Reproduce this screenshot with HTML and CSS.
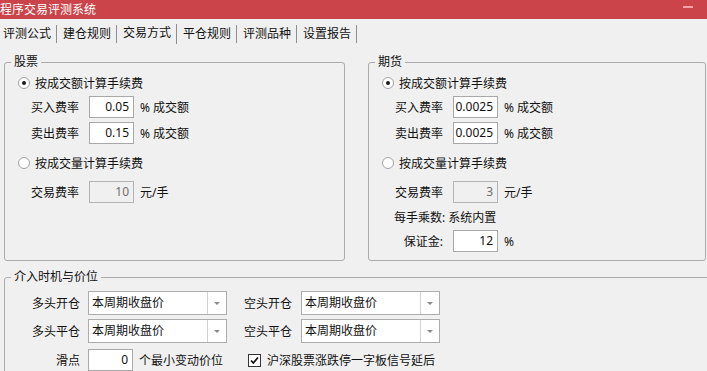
FILE: index.html
```html
<!DOCTYPE html>
<html>
<head>
  <title>程序交易评测系统</title>
  <link rel="stylesheet" href="styles.css">
</head>
<body>
  <div class="titlebar">
    <span class="title">程序交易评测系统</span>
    <span class="min-btn"></span>
  </div>

  <div class="tabs">
    <span class="tab">评测公式</span>
    <span class="tab">建仓规则</span>
    <span class="tab active">交易方式</span>
    <span class="tab">平仓规则</span>
    <span class="tab">评测品种</span>
    <span class="tab">设置报告</span>
  </div>

  <div class="panel">
    <div class="groups">
      <fieldset class="group">
        <legend>股票</legend>
        <div class="row opt first"><span class="radio on"></span>按成交额计算手续费</div>
        <div class="row field g2"><span class="lbl">买入费率</span><span class="box">0.05</span><span class="unit">% 成交额</span></div>
        <div class="row field g4"><span class="lbl">卖出费率</span><span class="box">0.15</span><span class="unit">% 成交额</span></div>
        <div class="row opt g8"><span class="radio"></span>按成交量计算手续费</div>
        <div class="row field g7"><span class="lbl">交易费率</span><span class="box off">10</span><span class="unit">元/手</span></div>
      </fieldset>

      <fieldset class="group futures">
        <legend>期货</legend>
        <div class="row opt first"><span class="radio on"></span>按成交额计算手续费</div>
        <div class="row field g2"><span class="lbl">买入费率</span><span class="box">0.0025</span><span class="unit">% 成交额</span></div>
        <div class="row field g4"><span class="lbl">卖出费率</span><span class="box">0.0025</span><span class="unit">% 成交额</span></div>
        <div class="row opt g8"><span class="radio"></span>按成交量计算手续费</div>
        <div class="row field g7"><span class="lbl">交易费率</span><span class="box off">3</span><span class="unit">元/手</span></div>
        <div class="row note g3">每手乘数: 系统内置</div>
        <div class="row field g2"><span class="lbl">保证金:</span><span class="box">12</span><span class="unit">%</span></div>
      </fieldset>
    </div>

    <fieldset class="group timing">
      <legend>介入时机与价位</legend>
      <div class="trow first">
        <div class="cell">
          <span class="tlbl">多头开仓</span>
          <span class="select">本周期收盘价<span class="arrow"></span></span>
        </div>
        <div class="cell">
          <span class="tlbl short">空头开仓</span>
          <span class="select">本周期收盘价<span class="arrow"></span></span>
        </div>
      </div>
      <div class="trow g4">
        <div class="cell">
          <span class="tlbl">多头平仓</span>
          <span class="select">本周期收盘价<span class="arrow"></span></span>
        </div>
        <div class="cell">
          <span class="tlbl short">空头平仓</span>
          <span class="select">本周期收盘价<span class="arrow"></span></span>
        </div>
      </div>
      <div class="trow slip">
        <div class="cell">
          <span class="tlbl">滑点</span>
          <span class="box">0</span>
          <span class="unit">个最小变动价位</span>
        </div>
        <div class="cell">
          <span class="check">
            <svg width="11" height="11" viewBox="0 0 11 11"><path d="M2 5.5 L4.3 8 L9 2.5" fill="none" stroke="#111" stroke-width="1.8"/></svg>
          </span>
          <span>沪深股票涨跌停一字板信号延后</span>
        </div>
      </div>
    </fieldset>
  </div>
</body>
</html>
```

FILE: styles.css
```css
  html, body {
    height: 371px;
  }

  body {
    margin: 0;
    padding: 0;
    background-color: #f0f0f0;
    font-family: "Noto Sans", "Noto Sans CJK SC", sans-serif;
    font-size: 12px;
    color: #111;
    overflow: hidden;
  }

  .titlebar {
    height: 19px;
    background-color: #ca4449;
    display: flex;
    align-items: center;
    justify-content: space-between;
  }

  .title {
    color: #fff;
    line-height: 19px;
  }

  .min-btn {
    width: 10px;
    height: 2px;
    margin-right: 14px;
    margin-bottom: 6px;
    background-color: #f3a3a6;
  }

  .tabs {
    height: 26px;
    box-sizing: border-box;
    padding-top: 4px;
    display: flex;
    align-items: center;
    margin-left: -3px;
  }

  .tab {
    height: 18px;
    line-height: 18px;
    padding: 0 5px 0 6px;
    border-right: 1px solid #8e8e8e;
    white-space: nowrap;
  }

  .tab.active {
    height: 20px;
  }

  .panel {
    padding: 0 0 0 4px;
  }

  .groups {
    display: flex;
    margin-top: 9px;
  }

  fieldset.group {
    margin: 0;
    padding: 0;
    border: 1px solid #ababab;
    border-radius: 3px;
    min-width: 0;
  }

  .groups .group {
    width: 341px;
    flex-shrink: 0;
    box-sizing: border-box;
    height: 207px;
  }

  .groups .futures {
    width: 338px;
    margin-left: 23px;
  }

  legend {
    margin-left: 6px;
    padding: 0 3px;
    line-height: 16px;
  }

  .row {
    height: 22px;
    display: flex;
    align-items: center;
    white-space: nowrap;
  }

  .first { margin-top: 2px; }
  .g2 { margin-top: 2px; }
  .g3 { margin-top: 3px; }
  .g4 { margin-top: 4px; }
  .g7 { margin-top: 7px; }
  .g8 { margin-top: 8px; }

  .opt {
    padding-left: 13px;
  }

  .radio {
    width: 10px;
    height: 10px;
    border: 1px solid #a2a2a2;
    border-radius: 50%;
    background-color: #fff;
    margin-right: 5px;
    position: relative;
  }

  .radio.on::after {
    content: "";
    position: absolute;
    left: 3px;
    top: 3px;
    width: 4px;
    height: 4px;
    border-radius: 50%;
    background-color: #1a1a1a;
  }

  .field {
    padding-left: 26px;
  }

  .note {
    padding-left: 25px;
  }

  .lbl {
    width: 48px;
    text-align: right;
    margin-right: 10px;
  }

  .box {
    width: 45px;
    height: 22px;
    box-sizing: border-box;
    border: 1px solid #a8a8a8;
    background-color: #fff;
    text-align: right;
    padding-right: 4px;
    line-height: 20px;
  }

  .box.off {
    background-color: #f0f0f0;
    color: #6f6f6f;
    border-color: #b4b4b4;
  }

  .unit {
    margin-left: 6px;
  }

  .timing {
    margin-top: 8px !important;
    margin-right: -20px !important;
    height: 104px;
  }

  .trow {
    display: flex;
    align-items: center;
    padding-left: 27px;
    white-space: nowrap;
  }

  .trow.first {
    margin-top: 6px;
  }

  .trow.slip {
    margin-top: 6px;
    height: 22px;
  }

  .cell {
    display: flex;
    align-items: center;
    width: 212px;
  }

  .tlbl {
    width: 48px;
    text-align: right;
    margin-right: 8px;
  }

  .tlbl.short {
    margin-right: 9px;
  }

  .select {
    width: 139px;
    height: 24px;
    box-sizing: border-box;
    border: 1px solid #acacac;
    background-color: #fff;
    line-height: 22px;
    padding-left: 3px;
    position: relative;
  }

  .arrow {
    position: absolute;
    right: 0;
    top: 0;
    width: 18px;
    height: 22px;
    border-left: 1px solid #d2d2d2;
  }

  .arrow::after {
    content: "";
    position: absolute;
    left: 6px;
    top: 10px;
    border-left: 3px solid transparent;
    border-right: 3px solid transparent;
    border-top: 3px solid #8a8a8a;
  }

  .check {
    width: 11px;
    height: 11px;
    border: 1px solid #333;
    background-color: #fff;
    margin: 0 6px 0 4px;
    display: flex;
  }
```
